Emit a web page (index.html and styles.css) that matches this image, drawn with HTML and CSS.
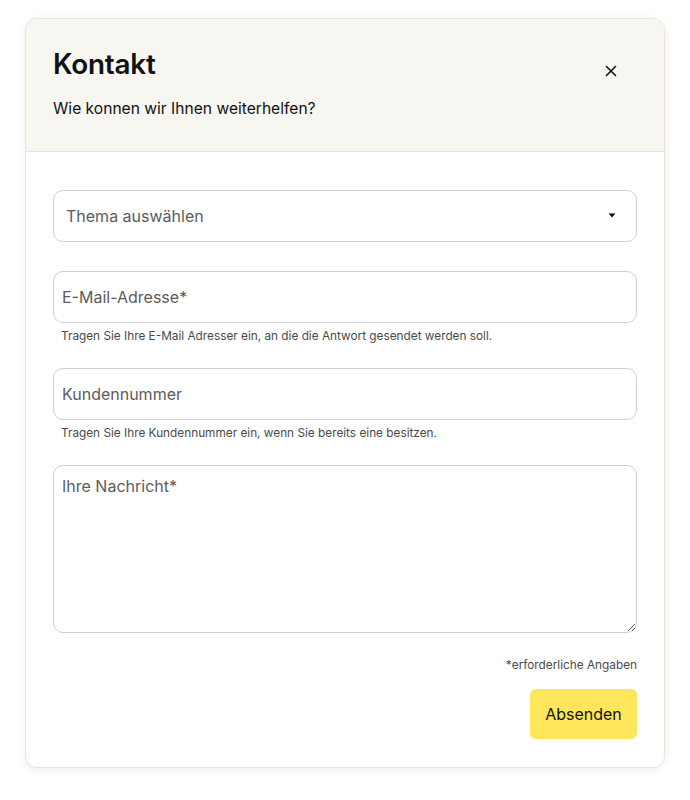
FILE: index.html
```html
<!DOCTYPE html>
<html lang="de">
<head>
<meta charset="utf-8">
<title>Kontakt</title>
<link rel="stylesheet" href="styles.css">
</head>
<body>
<div class="dialog">
  <header class="dialog-header">
    <div class="header-text">
      <h1 class="title">Kontakt</h1>
      <p class="subtitle">Wie konnen wir Ihnen weiterhelfen?</p>
    </div>
    <button class="close" type="button" aria-label="Schließen">
      <svg width="12" height="12" viewBox="0 0 12 12"><path d="M1.5 1.5L10.5 10.5M10.5 1.5L1.5 10.5" stroke="#111" stroke-width="1.6" stroke-linecap="round"/></svg>
    </button>
  </header>
  <form class="dialog-body">
    <div class="select-wrap">
      <select class="field select">
        <option>Thema auswählen</option>
      </select>
      <svg class="caret" width="8" height="5" viewBox="0 0 8 5"><path d="M0.5 0.5H7.5L4 4.5Z" fill="#111"/></svg>
    </div>
    <div class="group">
      <input class="field" type="email" placeholder="E-Mail-Adresse*">
      <p class="hint">Tragen Sie Ihre E-Mail Adresser ein, an die die Antwort gesendet werden soll.</p>
    </div>
    <div class="group">
      <input class="field" type="text" placeholder="Kundennummer">
      <p class="hint">Tragen Sie Ihre Kundennummer ein, wenn Sie bereits eine besitzen.</p>
    </div>
    <textarea class="field textarea" placeholder="Ihre Nachricht*"></textarea>
    <p class="required">*erforderliche Angaben</p>
    <div class="actions">
      <button class="submit" type="button">Absenden</button>
    </div>
  </form>
</div>
</body>
</html>
```

FILE: styles.css
```css
* { box-sizing: border-box; }
html, body { margin: 0; padding: 0; background: #fff; }
body {
  font-family: Inter, "Noto Sans", sans-serif;
  color: #111;
  padding: 18px 25px;
}
.dialog {
  width: 640px;
  border: 1px solid #ebe5d5;
  border-radius: 12px;
  background: #fff;
  box-shadow: 0 2px 10px rgba(0,0,0,0.07);
  overflow: hidden;
}
.dialog-header {
  background: #f7f6f1;
  border-bottom: 1px solid #e9e4d6;
  display: flex;
  justify-content: space-between;
  align-items: flex-start;
  padding: 29px 27px 0 27px;
  height: 133px;
}
.title {
  margin: 0;
  font-size: 27.8px;
  font-weight: 600;
  line-height: 32px;
  letter-spacing: -0.2px;
  color: #111;
}
.subtitle {
  margin: 19px 0 0 0;
  font-size: 15.6px;
  line-height: 20px;
  color: #111;
}
.close {
  background: none;
  border: 0;
  padding: 0;
  margin: 17px 20px 0 0;
  width: 12px;
  height: 12px;
  cursor: pointer;
  display: flex;
}
.dialog-body {
  padding: 38px 27px 28px 27px;
  display: flex;
  flex-direction: column;
}
.field {
  width: 100%;
  height: 52px;
  border: 1px solid #cfcfcf;
  border-radius: 10px;
  background: #fff;
  font-family: Inter, "Noto Sans", sans-serif;
  font-size: 16px;
  color: #111;
  padding: 0 8px;
  outline: none;
}
.field::placeholder { color: #5c5c5c; opacity: 1; }
.select-wrap { position: relative; margin-bottom: 29px; }
.select {
  appearance: none;
  -webkit-appearance: none;
  padding: 0 12px;
  color: #5c5c5c;
}
.caret { position: absolute; right: 21px; top: 23px; pointer-events: none; }
.group { margin-bottom: 24px; }
.group + .group { margin-bottom: 24px; }
.hint {
  margin: 6px 0 0 8px;
  font-size: 11.8px;
  line-height: 15px;
  color: #4a4a4a;
}
.textarea {
  height: 168px;
  padding: 10px 8px;
  resize: vertical;
  line-height: 20px;
}
.required {
  margin: 25px 0 0 0;
  text-align: right;
  font-size: 11.8px;
  line-height: 15px;
  color: #4a4a4a;
}
.actions { display: flex; justify-content: flex-end; margin-top: 16px; }
.submit {
  width: 107px;
  height: 50px;
  border: 0;
  border-radius: 6px;
  background: #ffe65a;
  font-family: Inter, "Noto Sans", sans-serif;
  font-size: 16px;
  color: #111;
  cursor: pointer;
}
```
